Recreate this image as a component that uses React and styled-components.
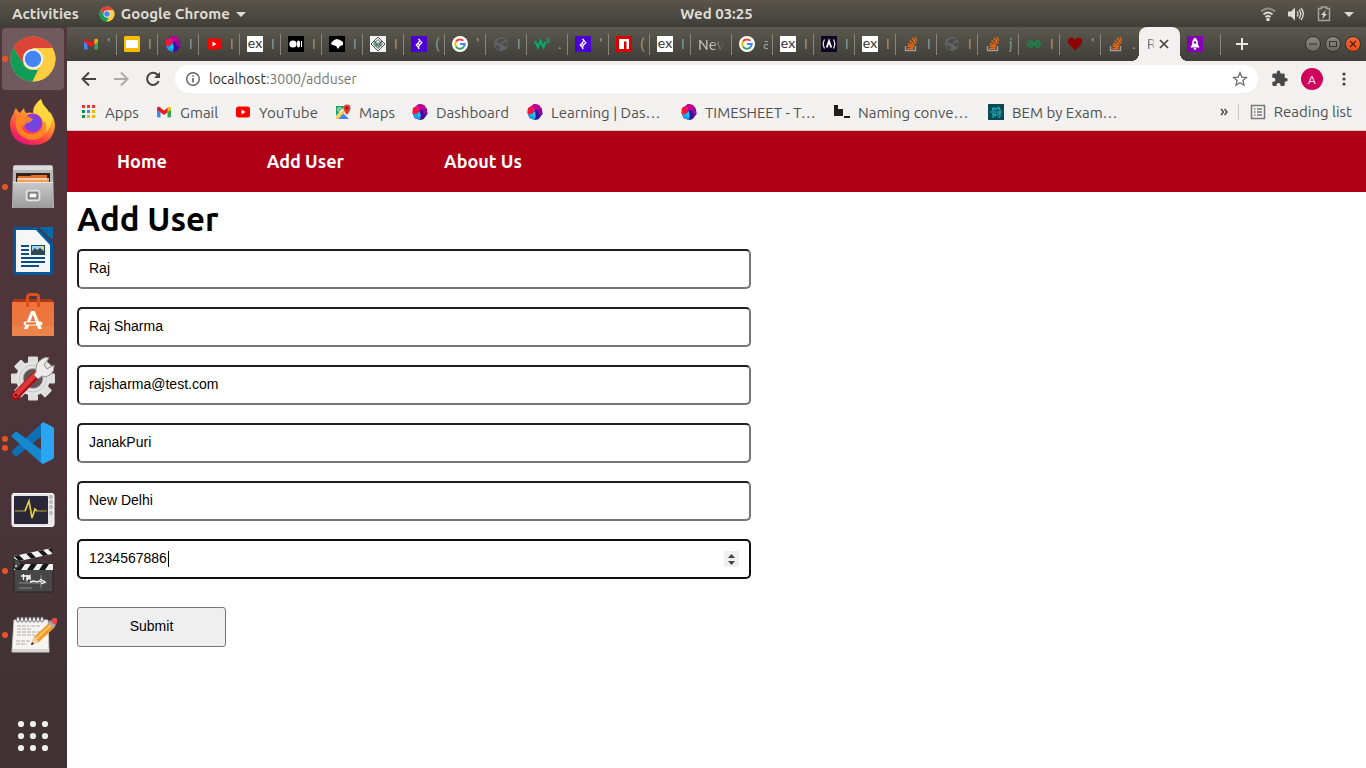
import React from "react";
import styled, { createGlobalStyle, css } from "styled-components";

const GlobalStyle = createGlobalStyle`
  *, *::before, *::after { box-sizing: border-box; }
  body { margin: 0; background: #fff; font-family: Ubuntu, "Noto Sans", "Open Sans", sans-serif; }
  button { font-family: inherit; border: 0; padding: 0; margin: 0; background: none; color: inherit; }
  svg { display: block; flex: none; }
  a { color: inherit; text-decoration: none; }
`;

/* ---------- desktop shell ---------- */

const Desktop = styled.div`
  display: flex;
  flex-direction: column;
  min-height: 100vh;
`;

const SystemBar = styled.header`
  display: grid;
  grid-template-columns: 1fr auto 1fr;
  align-items: center;
  height: 27px;
  padding: 0 12px;
  background: linear-gradient(#59554c, #403e38);
  color: #dfdbd2;
  white-space: nowrap;
`;

const SystemGroup = styled.div`
  display: flex;
  align-items: center;
  gap: ${(p) => p.$gap}px;
  justify-content: ${(p) => (p.$end ? "flex-end" : "flex-start")};
`;

const SystemButton = styled.button`
  display: flex;
  align-items: center;
  gap: 6px;
  font-size: 15px;
  font-weight: 700;
`;

const Clock = styled.time`
  margin-left: 67px;
  font-size: 15px;
  font-weight: 700;
`;

const Workspace = styled.div`
  display: flex;
  flex: 1;
`;

const Dock = styled.nav`
  display: flex;
  flex-direction: column;
  gap: 2px;
  width: 67px;
  flex: none;
  padding: 1px 3px 1px 2px;
  background: linear-gradient(#50373c, #4b343a 60%, #403234 90%);
`;

const DockItem = styled.button`
  position: relative;
  display: flex;
  align-items: center;
  justify-content: center;
  height: 62px;
  border-radius: 4px;
  background: ${(p) => (p.$active ? "#715a5e" : "transparent")};
  ${(p) => p.$last && css`margin-top: auto;`}
`;

const RunningDots = styled.span`
  position: absolute;
  left: 0;
  top: 0;
  bottom: 0;
  display: flex;
  flex-direction: column;
  justify-content: center;
  gap: 3px;
`;

const RunningDot = styled.i`
  width: 6px;
  height: 6px;
  border-radius: 50%;
  background: #e95420;
`;

/* ---------- browser ---------- */

const Browser = styled.div`
  display: flex;
  flex-direction: column;
  flex: 1;
  min-width: 0;
`;

const TabStrip = styled.div`
  display: flex;
  align-items: center;
  height: 34px;
  padding-left: 9px;
  background: linear-gradient(#5b594f, #3f3e38);
`;

const Tab = styled.button`
  display: flex;
  align-items: center;
  gap: 8px;
  width: 41px;
  height: 21px;
  padding-left: 7px;
  border-right: 1px solid ${(p) => (p.$plain ? "transparent" : "#88867d")};
  flex: none;
  overflow: hidden;
`;

const TabTitle = styled.span`
  width: ${(p) => (p.$wide ? 26 : 5)}px;
  overflow: hidden;
  white-space: nowrap;
  text-align: left;
  font-size: ${(p) => (p.$wide ? 15 : 14)}px;
  color: ${(p) => (p.$wide ? "#cfcdc6" : "#a3a199")};
  ${(p) => p.$wide && css`mask-image: linear-gradient(90deg, #000 50%, transparent);`}
`;

const ActiveTab = styled.div`
  position: relative;
  display: flex;
  align-items: center;
  gap: 5px;
  width: 41px;
  height: 34px;
  margin-left: -3px;
  padding-left: 8px;
  flex: none;
  border-radius: 8px 8px 0 0;
  background: #f2f1f0;
  color: #5a5a5a;
  font-size: 14px;
  &::before, &::after {
    content: "";
    position: absolute;
    bottom: 0;
    width: 8px;
    height: 8px;
  }
  &::before { left: -8px; background: radial-gradient(circle at 0 0, transparent 8px, #f2f1f0 8px); }
  &::after { right: -8px; background: radial-gradient(circle at 100% 0, transparent 8px, #f2f1f0 8px); }
`;

const ActiveTitle = styled.span`
  width: 7px;
  overflow: hidden;
  mask-image: linear-gradient(90deg, #000 20%, #0006);
`;

const IconButton = styled.button`
  display: flex;
  align-items: center;
  justify-content: center;
`;

const NewTab = styled(IconButton)`
  width: 24px;
  height: 24px;
  margin-left: 9px;
`;

const WindowButtons = styled.div`
  display: flex;
  gap: 4px;
  margin-left: auto;
  padding-right: 5px;
`;

const WindowButton = styled(IconButton)`
  width: 16px;
  height: 16px;
  border-radius: 50%;
  border: 1px solid #34332e;
  background: ${(p) => (p.$close ? "linear-gradient(#f4693d, #f04a10)" : "linear-gradient(#8b897f, #6b6960)")};
`;

const Toolbar = styled.div`
  display: flex;
  align-items: center;
  height: 36px;
  padding: 0 12px;
  background: #f2f1f0;
`;

const NavButtons = styled.div`
  display: flex;
  gap: 12px;
  margin-right: 12px;
`;

const Omnibox = styled.form`
  display: flex;
  align-items: center;
  gap: 7px;
  flex: 1;
  height: 28px;
  padding: 0 10px 0 9px;
  border-radius: 14px;
  background: #fff;
`;

const Url = styled.div`
  flex: 1;
  font-size: 14px;
  line-height: 20px;
  color: #757575;
  b { font-weight: 400; color: #303030; }
`;

const ToolbarActions = styled.div`
  display: flex;
  align-items: center;
  gap: 11px;
  margin-left: 12px;
`;

const Avatar = styled.button`
  width: 22px;
  height: 22px;
  border-radius: 50%;
  background: #d0005a;
  color: #fff;
  font-size: 12px;
`;

const BookmarkBar = styled.nav`
  display: flex;
  align-items: center;
  height: 34px;
  padding: 0 14px 3px;
  border-bottom: 1px solid #cbc9c7;
  background: #f2f1f0;
  color: #505050;
  font-size: 15px;
`;

const Bookmark = styled.a`
  display: flex;
  align-items: center;
  gap: 8px;
  margin-right: 15px;
  white-space: nowrap;
`;

const BookmarkLabel = styled.span`
  width: ${(p) => p.$width}px;
`;

const BookmarkEnd = styled.div`
  display: flex;
  align-items: center;
  gap: 10px;
  margin-left: auto;
  white-space: nowrap;
`;

const ReadingList = styled.button`
  display: flex;
  align-items: center;
  gap: 8px;
  padding-left: 11px;
  border-left: 1px solid #cfcdcb;
  font-size: 15px;
  line-height: 16px;
`;

/* ---------- page ---------- */

const SiteNav = styled.nav`
  display: flex;
  align-items: center;
  gap: 100px;
  height: 61px;
  padding: 0 50px 2px;
  background: #b00018;
  color: #fff;
  font-size: 18px;
  font-weight: 700;
`;

const SiteLink = styled.a`
  white-space: nowrap;
`;

const Page = styled.main`
  flex: 1;
  padding: 10px;
  background: #fff;
`;

const Title = styled.h1`
  margin: 0 0 13px;
  font-size: 33px;
  line-height: 34px;
  font-weight: 700;
  color: #000;
`;

const FieldBox = styled.div`
  position: relative;
  width: calc((100% + 20px) / 2 + 24px);
  margin-bottom: 18px;
`;

const Field = styled.input`
  display: block;
  width: 100%;
  height: 40px;
  padding: 9px 10px 11px;
  border: 2px solid;
  border-color: #1f1f22 #767676 #767676 #1f1f22;
  border-radius: 5px;
  background: #fff;
  color: #000;
  font: 14px/16px "Liberation Sans", Arial, sans-serif;
  outline: none;
  appearance: textfield;
  ${(p) => p.$current && css`border-color: #101010; caret-color: transparent;`}
`;

const Caret = styled.span`
  position: absolute;
  left: 91px;
  top: 12px;
  width: 1px;
  height: 16px;
  background: #000;
`;

const Stepper = styled.span`
  position: absolute;
  right: 12px;
  top: 12px;
  background: #efefef;
`;

const Submit = styled.button`
  width: 149px;
  height: 40px;
  margin-top: 10px;
  padding-bottom: 2px;
  border: 1px solid #767676;
  border-radius: 3px;
  background: #efefef;
  color: #000;
  font: 14px "Liberation Sans", Arial, sans-serif;
`;

/* ---------- small icons (16 x 16) ---------- */

const Svg = ({ s = 16, v, children, ...r }) => (
  <svg width={s} height={s} viewBox={v || "0 0 16 16"} fill="none" aria-hidden="true" {...r}>{children}</svg>
);

const Gmail = () => (
  <Svg>
    <path d="M1 4v8.500q0 1 1 1h2.500V7z" fill="#4285f4" />
    <path d="M15 4v8.500q0 1-1 1h-2.500V7z" fill="#34a853" />
    <path d="M4 3.500V8l4 3 4-3V3.500L8 6.500z" fill="#ea1c1c" />
    <path d="M1 4.500Q1 2.500 2.800 2.700L4.500 3.500V8L1 5.800z" fill="#d51f1f" />
    <path d="M15 4.500Q15 2.500 13.200 2.700L11.500 3.500V8l3.500-2.200z" fill="#fbbc04" />
  </Svg>
);
const Slides = () => (
  <Svg><rect width="16" height="16" rx="1.500" fill="#f9bc05" /><rect x="2" y="4" width="12" height="8" fill="#fff" /></Svg>
);
const Ball = () => (
  <Svg>
    <path d="M7 0l5 1 3 4 .5 5-4 5-4 1-5-2-2-5 1-5z" fill="#6a0aa8" />
    <path d="M7 0l5 1 2 4-4 1-3-1-3-2z" fill="#c4008c" />
    <path d="M1 4l2-1 3 3 1 2-2 2H1l-.5-3z" fill="#ff1430" />
    <path d="M3 3l3-1 2 4-2 1z" fill="#f0147c" />
    <path d="M1 10h3.500L8 7l1 5-1 4-5-2z" fill="#12a5ee" />
    <path d="M8 7l3-1 4 4-3.500 5L8 16l1-4z" fill="#3a0f9c" />
    <path d="M10 6l4-2 1.500 6-3 1z" fill="#8c0c9c" />
    <path d="M5 11l3-4v6z" fill="#16c8f0" />
  </Svg>
);
const YouTube = () => (
  <Svg><rect x="1" y="2.500" width="14" height="11" rx="2.500" fill="#f00" /><path d="M6.500 5.500v5L10.500 8z" fill="#fff" /></Svg>
);
const Ex = () => (
  <Svg>
    <rect width="16" height="16" fill="#fff" />
    <text x="8" y="11.500" textAnchor="middle" fontFamily="Lato, sans-serif" fontSize="14" fill="#333">ex</text>
  </Svg>
);
const Medium = () => (
  <Svg>
    <rect width="16" height="16" rx="1" fill="#000" />
    <circle cx="5" cy="8" r="3.600" fill="#fff" /><ellipse cx="10.500" cy="8" rx="1.600" ry="3.400" fill="#fff" /><path d="M13.500 5v6" stroke="#fff" />
  </Svg>
);
const Cloud = () => (
  <Svg><rect width="16" height="16" fill="#000" /><path d="M2 7l3-3 3-1 3 1 3 2v3l-3 1-2 3-2-3-3-1H3z" fill="#fff" /></Svg>
);
const Robot = () => (
  <Svg>
    <rect width="16" height="16" fill="#f3f3f3" />
    <path d="M8 1l7 7-7 7-7-7zM8 3.500L12.500 8 8 12.500 3.500 8z" stroke="#555" />
    <rect x="4" y="6.500" width="8" height="4.500" rx="2" fill="#6d9c84" /><path d="M6 8.500h1M9 8.500h1M4 5l2 2M12 5l-2 2" stroke="#294b3b" />
  </Svg>
);
const Toptal = () => (
  <Svg><rect width="16" height="16" fill="#4b00d1" /><path d="M7.500 3l3.300 3.700-2.800 3 -.5 3.300M8.500 12.500L5.200 9 8 6.300 8.500 3M7 7.500l1.500 1.500" stroke="#fff" strokeWidth="1.200" /></Svg>
);
const Google = () => (
  <Svg>
    <circle cx="8" cy="8" r="8" fill="#fff" />
    <path d="M11.300 4.700A4.800 4.800 0 0 0 3.900 5.700" stroke="#ea4335" strokeWidth="2" />
    <path d="M3.900 5.600a4.800 4.800 0 0 0 0 4.900" stroke="#fbbc05" strokeWidth="2" />
    <path d="M3.900 10.400a4.800 4.800 0 0 0 7.200 1.200" stroke="#34a853" strokeWidth="2" />
    <path d="M8 8h4.700a4.800 4.800 0 0 1-1.700 3.700" stroke="#4285f4" strokeWidth="2" />
  </Svg>
);
const Globe = () => (
  <Svg>
    <circle cx="8" cy="8" r="7" fill="#606368" />
    <path d="M7 2.500L11 3l-1 2-2 .5.500 2H6L4 6.500 2.500 7 4 4z" fill="#4c4b44" transform="translate(1 0)" />
    <path d="M2 9l3 .5 2 1.500-.5 3L4 13zM13.500 6l1 2-1.500 3-2.500-1.500L9 8.500z" fill="#4c4b44" />
  </Svg>
);
const W3 = () => (
  <Svg>
    <path d="M1 5l3 6 2.500-6 3 6 2-5" stroke="#05a86b" strokeWidth="2.200" />
    <text x="12" y="7" fontFamily="Roboto, sans-serif" fontSize="7" fontWeight="700" fill="#05a86b">3</text>
  </Svg>
);
const Npm = () => (
  <Svg><rect width="16" height="16" fill="#d90000" /><path d="M3 3h10v10h-2.500V5.500H8V13H3z" fill="#fff" /></Svg>
);
const FreeCode = () => (
  <Svg>
    <rect width="16" height="16" fill="#0f0523" />
    <path d="M3.500 3.500Q1 8 3.500 12.500M12.500 3.500Q15 8 12.500 12.500" stroke="#ddd" strokeWidth="1.300" /><path d="M5.800 11.500L8 5l2.200 6.500" stroke="#fff" strokeWidth="1.800" />
  </Svg>
);
const Stack = () => (
  <Svg>
    <path d="M2.500 10v4.500h10V10" stroke="#a0a0a0" strokeWidth="1.300" />
    <path d="M4.500 12.500h6M4.500 10l6 1M5 7.500l6 2.300M6.500 4.500l5 4M9 2l4 5.500M12 1l1.500 4" stroke="#f4660b" strokeWidth="1.400" />
  </Svg>
);
const Geeks = () => (
  <Svg>
    <path d="M1 8h14M2 5.500Q4.500 4 6 6t0 4.500q-2.500 2-4.500-2.500M14 5.500Q11.500 4 10 6t0 4.500q2.500 2 4.500-2.500" stroke="#0f8f46" strokeWidth="1.400" />
  </Svg>
);
const Heart = () => (
  <Svg><path d="M8 14.500L1.500 8Q-.500 4 2.500 2 6 .500 8 4q2-3.500 5.500-2 3 2 1 6z" fill="#8e0303" /></Svg>
);
const Rocket = () => (
  <Svg><rect width="16" height="16" fill="#8500b4" /><path d="M8 1.500q3.500 3 2.700 6.500l1.800 3.500h-9L5.300 8Q4.500 4.500 8 1.500zM6.500 12h3L8 14.500z" fill="#fff" /><circle cx="8" cy="6.500" r="1.200" fill="#8500b4" /></Svg>
);
const Apps = () => (
  <Svg>
    {["#e33", "#e33", "#e33", "#0a8f48", "#4285f4", "#f5b400", "#0a8f48", "#f5b400", "#f5b400"].map((c, i) => (
      <rect key={i} x={1 + (i % 3) * 5} y={1 + Math.floor(i / 3) * 5} width="3" height="3" fill={c} />
    ))}
  </Svg>
);
const Maps = () => (
  <Svg>
    <rect x="1" y="2" width="13" height="13" rx="1" fill="#f2f2f2" />
    <path d="M1 2h9L1 12z" fill="#1fa463" /><path d="M3 15l5-6 6 6z" fill="#4285f4" /><path d="M1 13L11 3l2 2L3 15H1z" fill="#ffd04b" />
    <circle cx="4.500" cy="5.500" r="1.700" stroke="#fff" />
    <path d="M12 11Q8.500 6.500 8.500 4a3.500 3.500 0 0 1 7 0Q15.500 6.500 12 11z" fill="#e13b30" /><circle cx="12" cy="4" r="1.300" fill="#7c1713" />
  </Svg>
);
const Blocks = () => (
  <Svg><path d="M0 1h4v4h5v7H0zM10 12h6v2h-6z" fill="#1e1e1e" /></Svg>
);
const Bem = () => (
  <Svg>
    <rect width="16" height="16" fill="#0b4a55" />
    <path d="M2 8h12M4 6h3V4H4.500v2M8 6V4h3v2M11 2.500V6M4.500 10h3v2H5M5 9v5M9 12v-2h3v3h-2M12 5v5" stroke="#25b5c2" />
  </Svg>
);

/* ---------- dock icons (48 x 48) ---------- */

const ChromeLogo = ({ s }) => (
  <Svg s={s} v="0 0 48 48">
    <circle cx="24" cy="24" r="22.500" fill="#fbc93d" />
    <path d="M4.500 12.800A22.500 22.500 0 0 1 43.500 13H24L14.500 29.500z" fill="#db4437" />
    <path d="M4.500 12.800L14.500 29.500Q18 35 24 35h5L23.500 46.500A22.500 22.500 0 0 1 4.500 12.800z" fill="#0f9d58" />
    <path d="M24 13h19.500A22.500 22.500 0 0 1 23.500 46.500L33.500 29.500z" fill="#ffcd40" />
    <circle cx="24" cy="24" r="10.300" fill="#f1f1f1" /><circle cx="24" cy="24" r="8.200" fill="#4285f4" />
  </Svg>
);
const Firefox = () => (
  <Svg s={48} v="0 0 48 48">
    <defs>
      <linearGradient id="ffa" x1="0.800" y1="0" x2="0.300" y2="1"><stop stopColor="#fff44f" /><stop offset=".4" stopColor="#ffa22e" /><stop offset=".75" stopColor="#ff4040" /><stop offset="1" stopColor="#e3127d" /></linearGradient>
      <radialGradient id="ffb"><stop stopColor="#5b4fe0" /><stop offset="1" stopColor="#9a35d6" /></radialGradient>
    </defs>
    <path d="M7 9q1 3 4 5l4-5q0 3 2 5 4-1 7 0 0-6 3-9 2-3 5-5 1 5 5 9 2 2 3 6l1-2q5 7 5 14-2 19-22 19Q3 46 1 27 1 19 5 14q0-3 2-5z" fill="url(#ffa)" />
    <circle cx="24" cy="24" r="9.500" fill="url(#ffb)" />
    <path d="M9 18q7-3 13 1l2 1q-2 4-7 4-1 5-5 2 1 9 11 9 11-1 13-11 4 8-3 14-9 6-19 0-9-6-7-17z" fill="#ff8a24" opacity=".9" />
    <path d="M32 1q-5 4-7 9l0 4q7 2 9 9l2-1q3 6 0 12 7-6 7-15-1-5-5-9-5-4-6-9z" fill="#ffdf3e" opacity=".8" />
  </Svg>
);
const Files = () => (
  <Svg s={48} v="0 0 48 48">
    <defs><linearGradient id="fl" x2="0" y2="1"><stop stopColor="#c9c9c9" /><stop offset="1" stopColor="#9b9b9b" /></linearGradient></defs>
    <path d="M4 4q0-2 2-2h36q2 0 2 2l1 41H3z" fill="#b8b8b8" /><path d="M5 3h38v4H4z" fill="#dcdcdc" />
    <path d="M7 10h34v10H7z" fill="#33231d" /><path d="M9 13h12l2-1h15v8H9z" fill="#e1732e" /><path d="M8 16h32" stroke="#ffe9cf" strokeWidth="1.500" />
    <path d="M8 17h32v3H8z" fill="#efa055" /><rect x="4" y="19" width="40" height="26" fill="url(#fl)" /><path d="M4 19.500h40" stroke="#e6e6e6" />
    <rect x="17.500" y="27.500" width="13" height="10" rx="2" fill="#aaa" stroke="#e5e5e5" strokeWidth="1.500" /><rect x="20" y="30" width="8" height="5" fill="#fff" stroke="#555" />
  </Svg>
);
const Writer = () => (
  <Svg s={48} v="0 0 48 48">
    <path d="M6 0h22l16 16v30q0 2-2 2H6q-2 0-2-2V2q0-2 2-2z" fill="#03579a" />
    <path d="M7 3h20l14 15v27H7z" fill="#f6f6f6" /><path d="M30 0h14v12q-2 0-4-2z" fill="#0869a9" />
    <path d="M12 19h8M12 23h8M12 27h8M12 31h24M12 35h24M12 39h18" stroke="#0b4d85" strokeWidth="2" />
    <rect x="22.500" y="18.500" width="13" height="9" fill="#9fd1f2" stroke="#174f77" /><path d="M23 27v-3l3-3 2 2 3-2 4 3v3z" fill="#36454b" /><circle cx="33.500" cy="20.500" r="1.500" fill="#f8d343" />
  </Svg>
);
const Software = () => (
  <Svg s={48} v="0 0 48 48">
    <defs><linearGradient id="sw" x2="0" y2="1"><stop stopColor="#ef7239" /><stop offset="1" stopColor="#e67c45" /></linearGradient></defs>
    <path d="M5 8h38l2 4H3z" fill="#a8391a" /><rect x="3" y="11" width="42" height="34" fill="url(#sw)" /><path d="M3 35h42v10H3z" fill="#ef8a50" opacity=".6" />
    <path d="M18.500 16V6.500q0-3 3-3h5q3 0 3 3V16" stroke="#dc501b" strokeWidth="3" />
    <text x="24" y="38" textAnchor="middle" fontFamily="Lato, sans-serif" fontWeight="700" fontSize="25" fill="#fff">A</text>
    <path d="M16.500 32.500h15" stroke="#fff" strokeWidth="4" strokeLinecap="round" /><path d="M17 32.500h10" stroke="#ea6b30" strokeWidth="2" />
  </Svg>
);
const Tools = () => (
  <Svg s={48} v="0 0 48 48">
    {[0, 45, 90, 135].map((a) => (
      <rect key={a} x="19" y="1.500" width="10" height="44" rx="1" fill="#dedede" transform={`rotate(${a} 24 23.500)`} />
    ))}
    <circle cx="24" cy="23.500" r="17" fill="#e3e3e3" /><circle cx="24" cy="23.500" r="13.500" stroke="#c4c4c4" /><circle cx="24" cy="23.500" r="10" fill="#655257" stroke="#b5b5b5" />
    <path d="M6.500 41L28 19" stroke="#a80e12" strokeWidth="8" strokeLinecap="round" /><path d="M6.500 40L27 19" stroke="#dc3838" strokeWidth="5" strokeLinecap="round" />
    <path d="M27 17q-1-9 6-13 4-3 7-1l-5 7 3 4 7-4q1 6-4 10-5 3-8 1l-4 3-4-4z" fill="#ecebea" stroke="#92918e" /><circle cx="7" cy="40" r="1.300" fill="#5c0b0b" />
  </Svg>
);
const Code = () => (
  <Svg s={48} v="0 0 48 48">
    <path d="M34 3v13L8 37q-1 1-2 0l-3-3q-1-1 0-2z" fill="#0f6fb4" />
    <path d="M34 45V32L8 13q-1-1-2 0l-3 3q-1 1 0 2l29 26z" fill="#1688d0" />
    <path d="M34 3l10 5q1 1 1 2v28q0 1-1 2l-10 5-2-2V5z" fill="#2aa5f2" />
  </Svg>
);
const Monitor = () => (
  <Svg s={48} v="0 0 48 48">
    <rect x="3" y="10.500" width="42" height="33" rx="2" fill="#e9e7e4" stroke="#fff" /><rect x="5" y="13" width="34" height="28" rx="1" fill="#292638" />
    <path d="M6 28h10l4-10 3 17 3-9 2 2h10" stroke="#8b7d34" strokeWidth="1.500" /><path d="M16 28l4-10 3 17 3-9 2 2" stroke="#e1cf3c" strokeWidth="1.500" />
    {[14, 19, 24, 30].map((y) => <circle key={y} cx="42" cy={y} r="1.500" fill="#d0cfcc" stroke="#999" strokeWidth=".7" />)}
  </Svg>
);
const Clapper = () => (
  <Svg s={48} v="0 0 48 48">
    <path d="M5 9L43 1v6L6 15z" fill="#f2f2f2" /><path d="M5 9l5-1 5 5-5 1zM17 6.500l5-1 5 5-5 1zM29 4l5-1 5 5-5 1zM39 2l4-1v5z" fill="#171717" />
    <rect x="5" y="17" width="39" height="28" rx="1" fill="#474747" stroke="#242424" /><path d="M5 17h39v6H5z" fill="#f0f0f0" /><path d="M10 17h6l-4 6H6zM22 17h6l-4 6h-6zM34 17h6l-4 6h-6z" fill="#171717" />
    <path d="M5 12l8 4-5 6-3-1z" fill="#4a4a4a" stroke="#222" /><circle cx="7" cy="19" r="1" fill="#ddd" />
    <path d="M10 36h28M10 41h13M32 28v13" stroke="#888" /><path d="M12 29h9M14.500 27v6M18 28v5l3-4v4M21 35l4-1 3 1 2-1 3 1M31 32l5 3-4 2" stroke="#fff" strokeWidth="1.300" />
  </Svg>
);
const Notes = () => (
  <Svg s={48} v="0 0 48 48">
    <path d="M5 9h34l1 32H3z" fill="#f6f5f2" stroke="#cbc9c5" /><path d="M3 38h37v3H3z" fill="#d5d3cf" />
    {[9, 13, 17, 21, 25, 29, 33].map((x) => <ellipse key={x} cx={x} cy="8.500" rx="1.500" ry="2.700" fill="#eee" stroke="#555" strokeWidth=".8" />)}
    <path d="M8 15h12M22 15h9M8 18h15M8 21h26M8 24h18M7 30h14M7 33h11" stroke="#aaa" strokeDasharray="4 1" />
    <path d="M22 34l3-8L41 11l5 5-16 15z" fill="#f39a2a" /><path d="M27 28L43 13" stroke="#ffc568" strokeWidth="2" /><path d="M22 34l3-8 5 5z" fill="#efd3a4" /><path d="M22 34l1-3 2 2z" fill="#111" />
    <path d="M39 12l3-3 5 5-3 3z" fill="#a8a8b0" /><circle cx="45.500" cy="10" r="3" fill="#e84b4f" />
  </Svg>
);
const AppGrid = () => (
  <Svg s={48} v="0 0 48 48">
    {[0, 1, 2, 3, 4, 5, 6, 7, 8].map((i) => <circle key={i} cx={12 + (i % 3) * 12} cy={12 + Math.floor(i / 3) * 12} r="3.100" fill="#ededed" />)}
  </Svg>
);

/* ---------- data ---------- */

const tabs = [
  [Gmail, "'"], [Slides, "I"], [Ball, "I"], [YouTube, "I"], [Ex, "I"], [Medium, "I"], [Cloud, "I"], [Robot, "I"],
  [Toptal, "("], [Google, "'"], [Globe, "I"], [W3, "."], [Toptal, "'"], [Npm, "("], [Ex, "I"], [null, "New"],
  [Google, "a"], [Ex, "I"], [FreeCode, "I"], [Ex, "I"], [Stack, "I"], [Globe, "I"], [Stack, "j"], [Geeks, "I"],
  [Heart, "'"], [Stack, "."],
];

const bookmarks = [
  [Apps, "Apps", 36], [Gmail, "Gmail", 40], [YouTube, "YouTube", 61], [Maps, "Maps", 38], [Ball, "Dashboard", 76],
  [Ball, "Learning | Das…", 115], [Ball, "TIMESHEET - T…", 114], [Blocks, "Naming conve…", 115], [Bem, "BEM by Exam…", 108],
];

const dock = [
  ["Google Chrome", ChromeLogo, 1], ["Firefox", Firefox, 0], ["Files", Files, 1], ["Writer", Writer, 0], ["Software", Software, 0],
  ["Settings", Tools, 0], ["Code", Code, 2], ["System Monitor", Monitor, 0], ["Video Editor", Clapper, 1], ["Text Editor", Notes, 1],
];

const fields = [
  ["Name", "text", "Raj"], ["Full name", "text", "Raj Sharma"], ["Email", "email", "rajsharma@test.com"],
  ["Address", "text", "JanakPuri"], ["City", "text", "New Delhi"], ["Phone", "number", "1234567886"],
];

const FormField = ({ label, type, value }) => {
  const current = type === "number";
  return (
    <FieldBox>
      <Field aria-label={label} type={type} defaultValue={value} $current={current} />
      {current && (
        <>
          <Caret />
          <Stepper>
            <svg width="15" height="16" viewBox="0 0 15 16" fill="#444" aria-hidden="true"><path d="M4 7l3.500-4L11 7zM4 10h7l-3.500 4z" /></svg>
          </Stepper>
        </>
      )}
    </FieldBox>
  );
};

export default function App() {
  return (
    <Desktop>
      <GlobalStyle />
      <SystemBar>
        <SystemGroup $gap={20}>
          <SystemButton>Activities</SystemButton>
          <SystemButton>
            <ChromeLogo s={16} />
            Google Chrome
            <Svg s={10} v="0 0 10 10"><path d="M0 3h10L5 8z" fill="#dfdbd2" /></Svg>
          </SystemButton>
        </SystemGroup>
        <Clock>Wed 03:25</Clock>
        <SystemGroup $gap={12} $end>
          <Svg>
            <path d="M1 5.500q7-6 14 0" stroke="#8f8c84" strokeWidth="2" /><path d="M3.500 8.500q4.500-4 9 0M5.500 11q2.500-2 5 0" stroke="#dfdbd2" strokeWidth="1.700" /><circle cx="8" cy="13.500" r="1.800" fill="#dfdbd2" />
          </Svg>
          <Svg><path d="M0 5.500h3l4-4v13l-4-4H0z" fill="#dfdbd2" /><path d="M9 5.500q2 2.500 0 5M11 3.500q3.500 4.500 0 9M13 2q4.500 6 0 12" stroke="#dfdbd2" strokeWidth="1.300" /></Svg>
          <Svg><path d="M5.500 2.500V1h5v1.500h3v12h-11v-12z" stroke="#a5a29a" strokeWidth="1.500" /><path d="M10 4L5 9h2.500L6 13l5-5H8.500z" fill="#dfdbd2" /></Svg>
          <Svg s={10} v="0 0 10 10"><path d="M0 3h10L5 8z" fill="#dfdbd2" /></Svg>
        </SystemGroup>
      </SystemBar>
      <Workspace>
        <Dock aria-label="Applications">
          {dock.map(([name, Icon, dots], i) => (
            <DockItem key={name} aria-label={name} $active={i === 0}>
              <RunningDots>{Array.from({ length: dots }, (_, d) => <RunningDot key={d} />)}</RunningDots>
              <Icon s={48} />
            </DockItem>
          ))}
          <DockItem aria-label="Show applications" $last><AppGrid /></DockItem>
        </Dock>
        <Browser>
          <TabStrip>
            {tabs.map(([Icon, title], i) => (
              <Tab key={i} $plain={i === tabs.length - 1}>
                {Icon && <Icon />}
                <TabTitle $wide={!Icon}>{title}</TabTitle>
              </Tab>
            ))}
            <ActiveTab>
              <ActiveTitle>R</ActiveTitle>
              <IconButton aria-label="Close tab"><Svg s={10} v="0 0 10 10"><path d="M1 1l8 8M9 1L1 9" stroke="#444" strokeWidth="1.700" /></Svg></IconButton>
            </ActiveTab>
            <Tab aria-label="Tab"><Rocket /></Tab>
            <NewTab aria-label="New tab"><Svg s={12} v="0 0 12 12"><path d="M6 0v12M0 6h12" stroke="#e8e6df" strokeWidth="2" /></Svg></NewTab>
            <WindowButtons>
              <WindowButton aria-label="Minimize"><Svg s={10} v="0 0 10 10"><path d="M1 5h8" stroke="#34332e" /></Svg></WindowButton>
              <WindowButton aria-label="Maximize"><Svg s={10} v="0 0 10 10"><rect x="1.500" y="2.500" width="7" height="5" stroke="#34332e" /></Svg></WindowButton>
              <WindowButton aria-label="Close" $close><Svg s={10} v="0 0 10 10"><path d="M2 2l6 6M8 2L2 8" stroke="#4a1c0d" strokeWidth="1.200" /></Svg></WindowButton>
            </WindowButtons>
          </TabStrip>
          <Toolbar>
            <NavButtons>
              <IconButton aria-label="Back"><Svg s={20} v="0 0 20 20"><path d="M17 10H4M10 3.500L3.500 10l6.500 6.500" stroke="#444" strokeWidth="2" /></Svg></IconButton>
              <IconButton aria-label="Forward"><Svg s={20} v="0 0 20 20"><path d="M3 10h13M10 3.500l6.500 6.500-6.500 6.500" stroke="#aaa" strokeWidth="2" /></Svg></IconButton>
              <IconButton aria-label="Reload"><Svg s={20} v="0 0 20 20"><path d="M15.700 12A6 6 0 1 1 14.500 5.800L16 7.500" stroke="#444" strokeWidth="2" /><path d="M17 3v6h-6z" fill="#444" /></Svg></IconButton>
            </NavButtons>
            <Omnibox>
              <Svg s={18} v="0 0 18 18"><circle cx="9" cy="9" r="6.300" stroke="#5f5f5f" strokeWidth="1.400" /><path d="M9 8v4.500M9 5.200v1.600" stroke="#5f5f5f" strokeWidth="1.600" /></Svg>
              <Url><b>localhost</b>:3000/adduser</Url>
              <IconButton type="button" aria-label="Bookmark this page"><Svg><path d="M8 1.800l1.800 4.300 4.700.4-3.600 3.100 1.100 4.600L8 11.800l-4 2.400 1.100-4.600L1.500 6.500l4.700-.4z" stroke="#6c6c6c" strokeWidth="1.300" /></Svg></IconButton>
            </Omnibox>
            <ToolbarActions>
              <IconButton aria-label="Extensions"><Svg s={20} v="0 0 24 24"><path d="M20.500 11H19V7a2 2 0 0 0-2-2h-4V3.500a2.500 2.500 0 0 0-5 0V5H4a2 2 0 0 0-2 2v3.800h1.500a2.700 2.700 0 0 1 0 5.400H2V20a2 2 0 0 0 2 2h3.800v-1.500a2.700 2.700 0 0 1 5.400 0V22H17a2 2 0 0 0 2-2v-4h1.500a2.500 2.500 0 0 0 0-5z" fill="#484848" transform="translate(1 1) scale(.88)" /></Svg></IconButton>
              <Avatar>A</Avatar>
              <IconButton aria-label="Menu"><Svg s={20} v="0 0 20 20"><circle cx="10" cy="5" r="1.600" fill="#444" /><circle cx="10" cy="10" r="1.600" fill="#444" /><circle cx="10" cy="15" r="1.600" fill="#444" /></Svg></IconButton>
            </ToolbarActions>
          </Toolbar>
          <BookmarkBar>
            {bookmarks.map(([Icon, label, width]) => (
              <Bookmark key={label} href="#"><Icon /><BookmarkLabel $width={width}>{label}</BookmarkLabel></Bookmark>
            ))}
            <BookmarkEnd>
              <IconButton aria-label="More bookmarks"><Svg s={8} v="0 0 8 8"><path d="M1 1l2.500 3L1 7M4.500 1L7 4 4.500 7" stroke="#444" strokeWidth="1.400" /></Svg></IconButton>
              <ReadingList>
                <Svg><rect x="1.500" y="1.500" width="13" height="13" stroke="#777" strokeWidth="1.500" /><path d="M4 5h1.500M4 8h1.500M4 11h1.500M7 5h5M7 8h5M7 11h5" stroke="#777" strokeWidth="1.400" /></Svg>
                Reading list
              </ReadingList>
            </BookmarkEnd>
          </BookmarkBar>
          <SiteNav>
            <SiteLink href="#">Home</SiteLink>
            <SiteLink href="#">Add User</SiteLink>
            <SiteLink href="#">About Us</SiteLink>
          </SiteNav>
          <Page>
            <Title>Add User</Title>
            <form>
              {fields.map(([label, type, value]) => (
                <FormField key={label} label={label} type={type} value={value} />
              ))}
              <Submit type="button">Submit</Submit>
            </form>
          </Page>
        </Browser>
      </Workspace>
    </Desktop>
  );
}
